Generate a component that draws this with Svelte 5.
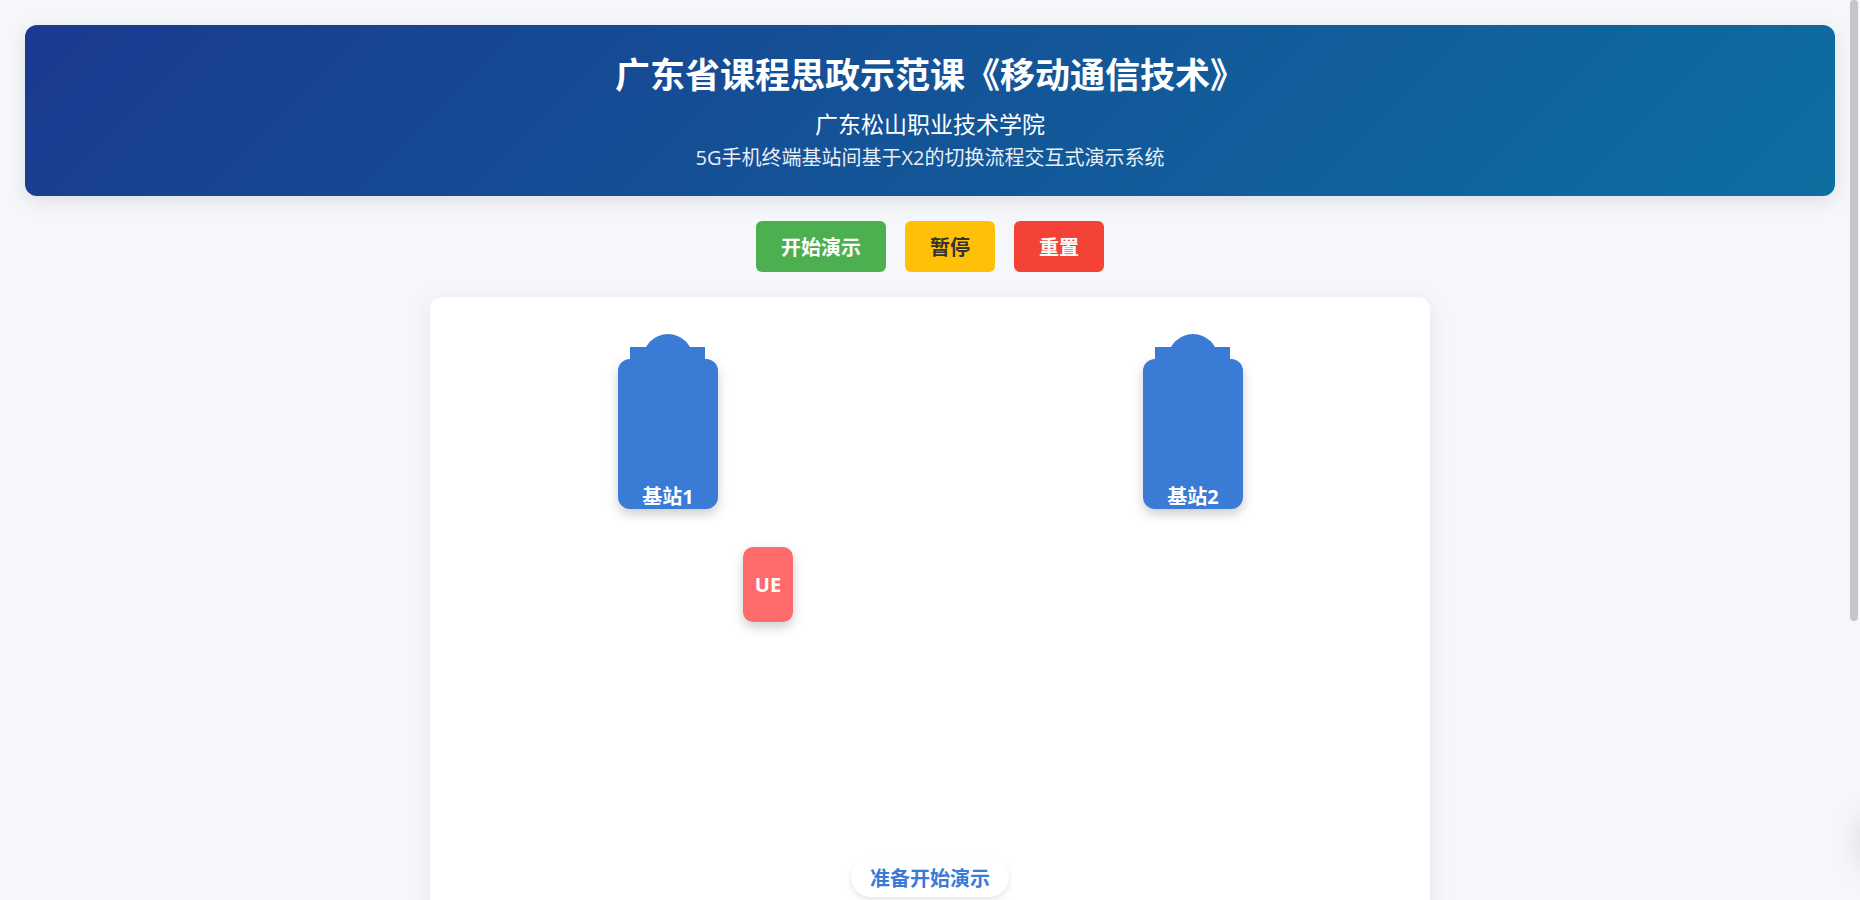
<script>
  // Nodes on the stage canvas
  const stations = [
    { id: 'bs1', label: '基站1' },
    { id: 'bs2', label: '基站2' },
  ];

  let status = $state('准备开始演示');

  function start() {
    status = '演示进行中';
  }

  function pause() {
    status = '演示已暂停';
  }

  function reset() {
    status = '准备开始演示';
  }
</script>

<div class="page">
  <header class="banner">
    <h1>广东省课程思政示范课《移动通信技术》</h1>
    <p class="school">广东松山职业技术学院</p>
    <p class="system">5G手机终端基站间基于X2的切换流程交互式演示系统</p>
  </header>

  <div class="controls">
    <button class="btn start" type="button" onclick={start}>开始演示</button>
    <button class="btn pause" type="button" onclick={pause}>暂停</button>
    <button class="btn reset" type="button" onclick={reset}>重置</button>
  </div>

  <main class="stage">
    {#each stations as station (station.id)}
      <div class="station {station.id}">
        <span>{station.label}</span>
      </div>
    {/each}

    <div class="ue">UE</div>

    <div class="status" role="status">{status}</div>
  </main>
</div>

<div class="drawer" aria-hidden="true"></div>
<div class="scroll-thumb" aria-hidden="true"></div>

<style>
  :global(html) {
    overflow: hidden;
  }

  :global(body) {
    margin: 0;
    background: #f5f7fb;
    color: #333;
    font-family: "Open Sans", "Noto Sans CJK SC", sans-serif;
  }

  .page {
    display: flex;
    flex-direction: column;
    align-items: center;
    gap: 25px;
    padding: 25px;
  }

  .banner {
    align-self: stretch;
    box-sizing: border-box;
    padding: 25px;
    border-radius: 12px;
    background: linear-gradient(135deg, #1a3a8f, #0d6ea0);
    box-shadow: 0 5px 19px rgba(0, 0, 0, 0.1);
    color: #fff;
    text-align: center;
  }

  h1 {
    margin: 0 0 10px;
    font-size: 35px;
    line-height: 50px;
  }

  .banner p {
    margin: 0;
  }

  .school {
    font-size: 23px;
    line-height: 28px;
  }

  .banner .system {
    margin-top: 7px;
    font-size: 20px;
    line-height: 26px;
    opacity: 0.9;
  }

  .controls {
    display: flex;
    gap: 19px;
  }

  .btn {
    padding: 13px 25px 11px;
    border: none;
    border-radius: 6px;
    font-family: inherit;
    font-size: 20px;
    font-weight: 700;
    line-height: 27px;
    color: #fff;
    cursor: pointer;
  }

  .start {
    background: #4caf50;
  }

  .pause {
    background: #ffc107;
    color: #333;
  }

  .reset {
    background: #f44336;
  }

  .stage {
    position: relative;
    width: 100%;
    max-width: 1000px;
    height: 625px;
    border-radius: 12px;
    background: #fff;
    box-shadow: 0 5px 25px rgba(0, 0, 0, 0.08);
  }

  .station {
    position: absolute;
    top: 62px;
    display: flex;
    align-items: flex-end;
    justify-content: center;
    width: 100px;
    height: 150px;
    border-radius: 12px;
    background: #3a7bd5;
    box-shadow: 0 5px 12px rgba(0, 0, 0, 0.2);
    color: #fff;
    font-size: 20px;
    font-weight: 700;
    line-height: 25px;
  }

  .bs1 {
    left: 188px;
  }

  .bs2 {
    right: 187px;
  }

  /* Antenna deck and dome on top of the tower */
  .station::before,
  .station::after {
    content: "";
    position: absolute;
    background: #3a7bd5;
  }

  .station::before {
    top: -12px;
    left: 12px;
    width: 75px;
    height: 12px;
  }

  .station::after {
    top: -25px;
    left: 25px;
    width: 50px;
    height: 50px;
    border-radius: 50%;
  }

  .ue {
    position: absolute;
    top: 250px;
    left: 313px;
    display: flex;
    align-items: center;
    justify-content: center;
    width: 50px;
    height: 75px;
    border-radius: 10px;
    background: #ff6b6b;
    box-shadow: 0 5px 12px rgba(0, 0, 0, 0.2);
    color: #fff;
    font-size: 20px;
    font-weight: 700;
  }

  .status {
    position: absolute;
    bottom: 25px;
    left: 50%;
    transform: translateX(-50%);
    padding: 8px 19px 4px;
    border-radius: 25px;
    background: #fff;
    box-shadow: 0 3px 6px rgba(0, 0, 0, 0.1);
    color: #3a7bd5;
    font-size: 20px;
    font-weight: 700;
    line-height: 28px;
    white-space: nowrap;
  }

  /* Collapsed side button, only its shadow reaches the window */
  .drawer {
    position: fixed;
    right: -52px;
    bottom: 33px;
    width: 50px;
    height: 50px;
    border-radius: 50%;
    box-shadow: 0 0 34px rgba(0, 0, 0, 0.18);
  }

  .scroll-thumb {
    position: fixed;
    top: 0;
    right: 2px;
    width: 8px;
    height: 69vh;
    border-radius: 4px;
    background: #c4c6c8;
  }
</style>
